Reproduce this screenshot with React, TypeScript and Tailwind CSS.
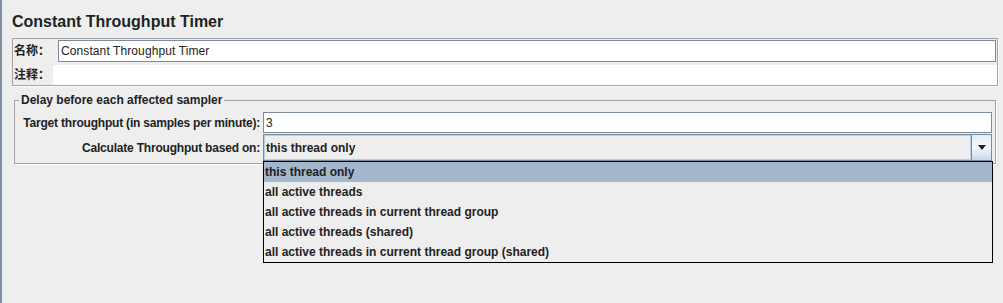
import React from 'react';

const options = [
  'this thread only',
  'all active threads',
  'all active threads in current thread group',
  'all active threads (shared)',
  'all active threads in current thread group (shared)',
];

const font = { fontFamily: '"Liberation Sans", Arial, "Noto Sans CJK SC", sans-serif' };

export default function App() {
  return (
    <div
      className="relative flex w-[1003px] h-[303px] overflow-hidden bg-[#eeeeee] text-[#222222]"
      style={font}
    >
      {/* left split bar */}
      <div className="w-[2px] shrink-0 bg-[#7f8fa0]" />

      <div className="flex flex-1 flex-col pl-[10px] pr-[5px]">
        {/* title */}
        <div className="h-[38px] pt-[12px] text-[16px] font-bold leading-[20px]">
          Constant Throughput Timer
        </div>

        {/* name / comment panel */}
        <div className="flex h-[48px] flex-col border border-[#a3a3a3] shadow-[1px_1px_0_#ffffff]">
          <div className="flex h-[24px] items-center">
            <span className="w-[45px] shrink-0 pl-[1px] text-[12px] font-bold leading-[14px]">名称：</span>
            <div className="mr-[1px] flex h-[22px] flex-1 items-center border border-[#7a8a99] bg-white pl-[2px] text-[12px] tracking-[0.1px]">
              Constant Throughput Timer
            </div>
          </div>
          <div className="flex h-[22px] items-end">
            <span className="w-[40px] shrink-0 self-center pl-[1px] pt-[2px] text-[12px] font-bold leading-[14px]">注释：</span>
            <div className="h-[20px] flex-1 bg-white" />
          </div>
        </div>

        {/* delay fieldset */}
        <fieldset className="mx-[2px] mt-[7px] border border-[#a3a3a3] px-0 pb-[2px] shadow-[1px_1px_0_#ffffff]">
          <legend className="ml-[4px] px-[2px] text-[12px] font-bold leading-[14px]">
            Delay before each affected sampler
          </legend>
          <div className="mt-[5px] flex h-[21px] items-center">
            <span className="flex w-[248px] shrink-0 justify-end whitespace-nowrap pr-[3px] text-[12px] font-bold tracking-[-0.2px]">
              Target throughput (in samples per minute):
            </span>
            <div className="mr-[3px] flex h-[21px] flex-1 items-center border border-[#7a8a99] bg-white pl-[2px] text-[12px]">
              3
            </div>
          </div>
          <div className="mt-[1px] flex h-[27px] items-center">
            <span className="flex w-[248px] shrink-0 justify-end whitespace-nowrap pr-[3px] text-[12px] font-bold tracking-[-0.2px]">
              Calculate Throughput based on:
            </span>
            <div className="mr-[3px] flex h-[27px] flex-1">
              <div className="flex flex-1 items-center border border-[#7a8a99] bg-[#eeeeee] pl-[2px] text-[12px] font-bold shadow-[inset_1px_1px_0_#b8cfe5,inset_-1px_-1px_0_#b8cfe5]">
                this thread only
              </div>
              <div className="flex w-[20px] items-center justify-center border border-l-0 border-[#7a8a99] bg-gradient-to-b from-[#e4edf6] via-[#f4f8fc] to-[#c6d8ea]">
                <svg width="8" height="5" viewBox="0 0 8 5">
                  <path d="M0 0H8L4 5Z" fill="#222222" />
                </svg>
              </div>
            </div>
          </div>
        </fieldset>
      </div>

      {/* open combo popup */}
      <div className="absolute left-[263px] top-[161px] w-[730px] border border-black bg-[#eeeeee]">
        {options.map((o, i) => (
          <div
            key={o}
            className={`flex h-[20px] items-center pl-[1px] text-[12px] font-bold ${i === 0 ? 'bg-[#a3b8cc]' : ''}`}
          >
            {o}
          </div>
        ))}
      </div>
    </div>
  );
}
